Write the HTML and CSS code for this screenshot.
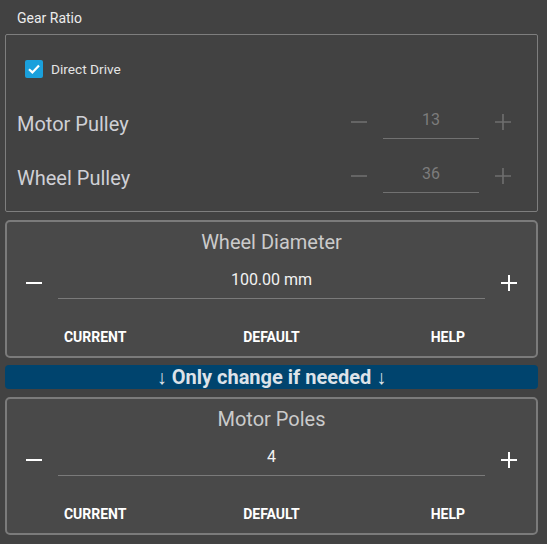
FILE: index.html
```html
<!DOCTYPE html>
<html>
<head>
<meta charset="utf-8">
<link rel="stylesheet" href="styles.css">
</head>
<body>
<div class="page">
  <div class="section-title">Gear Ratio</div>
  <div class="box">
    <div class="check-row">
      <span class="checkbox">
        <svg width="18" height="18" viewBox="0 0 18 18"><path d="M4 9.2 L7.4 12.4 L14 5.6" fill="none" stroke="#fff" stroke-width="2.2"/></svg>
      </span>
      <span class="check-label">Direct Drive</span>
    </div>
    <div class="pulley-row">
      <span class="pulley-label">Motor Pulley</span>
      <div class="stepper disabled">
        <span class="icon-btn"><svg width="16" height="16" viewBox="0 0 16 16"><path d="M0 8H16" stroke="currentColor" stroke-width="1.6"/></svg></span>
        <span class="small-input">13</span>
        <span class="icon-btn"><svg width="16" height="16" viewBox="0 0 16 16"><path d="M0 8H16M8 0V16" stroke="currentColor" stroke-width="1.6"/></svg></span>
      </div>
    </div>
    <div class="pulley-row">
      <span class="pulley-label">Wheel Pulley</span>
      <div class="stepper disabled">
        <span class="icon-btn"><svg width="16" height="16" viewBox="0 0 16 16"><path d="M0 8H16" stroke="currentColor" stroke-width="1.6"/></svg></span>
        <span class="small-input">36</span>
        <span class="icon-btn"><svg width="16" height="16" viewBox="0 0 16 16"><path d="M0 8H16M8 0V16" stroke="currentColor" stroke-width="1.6"/></svg></span>
      </div>
    </div>
  </div>

  <div class="card">
    <div class="card-title">Wheel Diameter</div>
    <div class="card-stepper">
      <span class="big-btn"><svg width="16" height="16" viewBox="0 0 16 16"><path d="M0 8H16" stroke="#fff" stroke-width="2"/></svg></span>
      <span class="big-input">100.00 mm</span>
      <span class="big-btn"><svg width="16" height="16" viewBox="0 0 16 16"><path d="M0 8H16M8 0V16" stroke="#fff" stroke-width="2"/></svg></span>
    </div>
    <div class="actions">
      <span class="action">CURRENT</span>
      <span class="action">DEFAULT</span>
      <span class="action">HELP</span>
    </div>
  </div>

  <div class="banner">↓ Only change if needed ↓</div>

  <div class="card">
    <div class="card-title">Motor Poles</div>
    <div class="card-stepper">
      <span class="big-btn"><svg width="16" height="16" viewBox="0 0 16 16"><path d="M0 8H16" stroke="#fff" stroke-width="2"/></svg></span>
      <span class="big-input">4</span>
      <span class="big-btn"><svg width="16" height="16" viewBox="0 0 16 16"><path d="M0 8H16M8 0V16" stroke="#fff" stroke-width="2"/></svg></span>
    </div>
    <div class="actions">
      <span class="action">CURRENT</span>
      <span class="action">DEFAULT</span>
      <span class="action">HELP</span>
    </div>
  </div>
</div>
</body>
</html>
```
FILE: styles.css
```css
html, body {
  margin: 0;
  padding: 0;
  background: #424242;
}
body {
  font-family: Roboto, "Liberation Sans", sans-serif;
  color: #e6e6e6;
}
.page {
  width: 533px;
  padding: 0 9px 0 5px;
}
.section-title {
  font-size: 14px;
  line-height: 20px;
  padding: 8px 0 6px 12px;
  color: #ececec;
}
.box {
  border: 1px solid #7e7e7e;
  border-radius: 2px;
  padding: 16px 18px 8px 11px;
  display: flex;
  flex-direction: column;
}
.check-row {
  height: 36px;
  margin-bottom: 8px;
  display: flex;
  align-items: center;
  padding-left: 8px;
}
.checkbox {
  width: 18px;
  height: 18px;
  border-radius: 2px;
  background: #1aa0dc;
  display: flex;
}
.check-label {
  margin-left: 8px;
  font-size: 13.7px;
  color: #e4e4e4;
}
.pulley-row {
  height: 54px;
  display: flex;
  align-items: center;
  justify-content: space-between;
}
.pulley-label {
  font-size: 20px;
  line-height: 24px;
  padding-top: 3px;
  color: #cfd0d6;
}
.stepper {
  display: flex;
  align-items: center;
  gap: 8px;
  color: #6f6f6f;
}
.icon-btn {
  width: 32px;
  height: 32px;
  display: flex;
  align-items: center;
  justify-content: center;
}
.small-input {
  width: 96px;
  text-align: center;
  font-size: 16px;
  line-height: 20px;
  padding-bottom: 8px;
  margin-top: 4px;
  border-bottom: 1px solid #717171;
  color: #7c7c7c;
}
.card {
  margin-top: 8px;
  border: 2px solid #7b7b7b;
  border-radius: 5px;
  background: #494949;
  padding: 8px 10px 9px;
}
.card-title {
  text-align: center;
  font-size: 20px;
  line-height: 24px;
  color: #cbcbcb;
}
.card-stepper {
  margin-top: 16px;
  display: flex;
  gap: 7px;
  align-items: flex-start;
}
.big-btn {
  width: 34px;
  height: 26px;
  display: flex;
  align-items: center;
  justify-content: center;
  flex: none;
}
.big-input {
  flex: 1;
  text-align: center;
  font-size: 16px;
  line-height: 20px;
  padding-bottom: 8px;
  border-bottom: 1px solid #7a7a7a;
  color: #f2f2f2;
}
.actions {
  margin: 28px -10px 0;
  display: flex;
}
.action {
  flex: 1;
  text-align: center;
  font-size: 14px;
  font-weight: 700;
  line-height: 20px;
  color: #ffffff;
}
.banner {
  margin-top: 7px;
  height: 24px;
  border-radius: 4px;
  background: #00446e;
  color: #dde2e8;
  font-size: 20px;
  font-weight: 700;
  line-height: 24px;
  text-align: center;
}
.banner + .card {
  margin-top: 8px;
}
```
